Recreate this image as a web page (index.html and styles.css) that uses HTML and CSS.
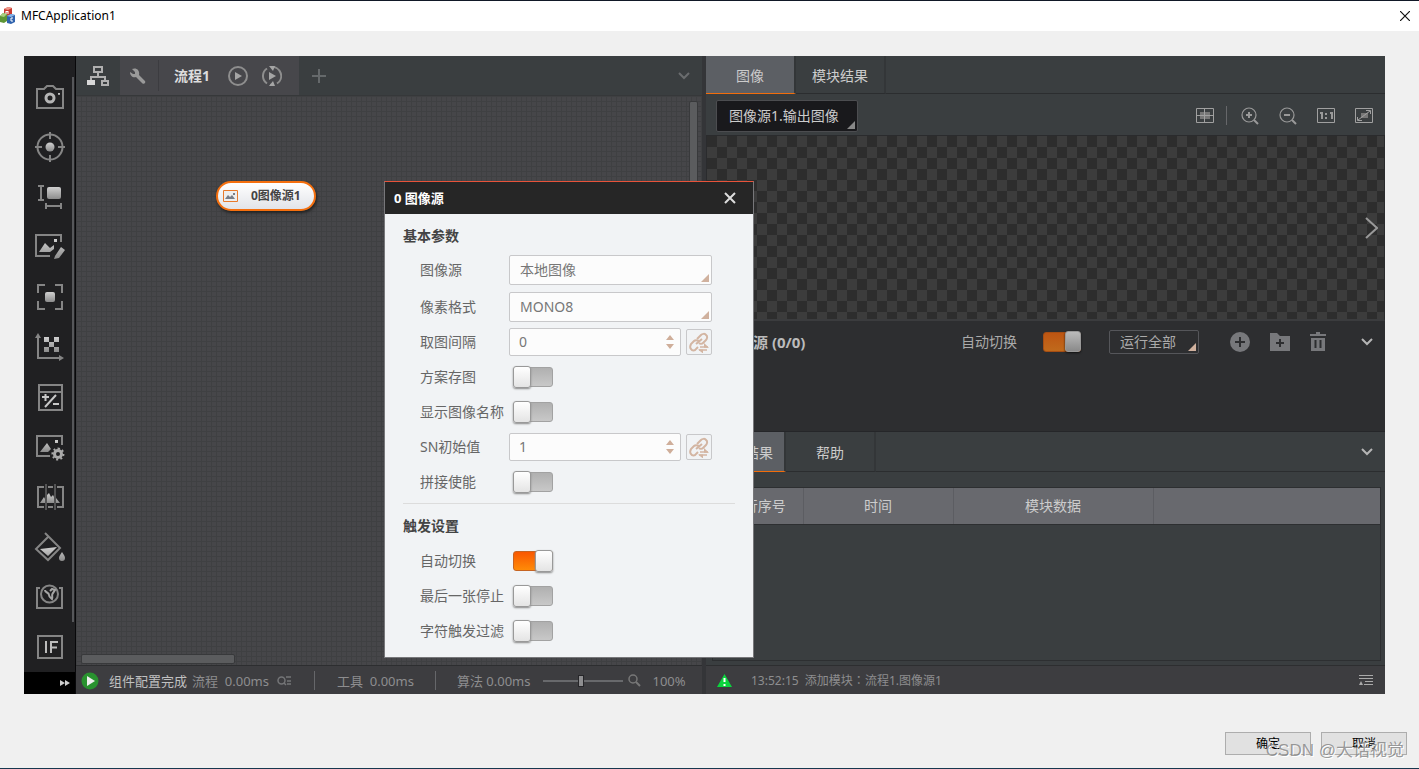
FILE: index.html
```html
<!DOCTYPE html>
<html lang="zh-CN">
<head>
<meta charset="utf-8">
<title>MFCApplication1</title>
<link rel="stylesheet" href="styles.css">
</head>
<body>
<svg width="0" height="0" class="defs" aria-hidden="true">
  <defs>
    <linearGradient id="g" x1="0" y1="0" x2="0" y2="1"><stop offset="0" stop-color="#d0d0d0"/><stop offset="1" stop-color="#8c8c8c"/></linearGradient>
    <symbol id="chev" viewBox="0 0 14 10"><path d="M2 2l5 5 5-5" fill="none" stroke="currentColor" stroke-width="2"/></symbol>
    <symbol id="link" viewBox="0 0 22 22">
      <g fill="none" stroke="#d3b5a2" stroke-width="2"><path d="M9 8l4-4c1-1 4-2 5 0 2 1 1 4 0 5l-3 3c-1 1-3 1-4 0"/><path d="M11 10c-2-1-4-1-5 0l-3 3c-1 2-1 4 0 5 1 2 4 2 5 0l2-2M8 13l6-5"/><path d="M12 16h8M11 19h8" stroke-width="1.500"/></g>
      <path d="M16 12l5 4.700h-5zM15 22.500l-5-4h5z" fill="#d3b5a2"/>
    </symbol>
  </defs>
</svg>
<div class="window">
  <header class="titlebar">
    <svg class="logo" width="16" height="18" viewBox="0 0 16 18">
      <path d="M4 2l4-2 4 1v6l-4 2-4-1z" fill="#c83a30"/><path d="M4 2l4 1 4-2-4-1z" fill="#f09a8c"/>
      <path d="M0 9l3-3 4 1v7l-3 2-4-1z" fill="#5d9636"/><path d="M0 9l3-3 4 1-3 3z" fill="#a8cf80"/>
      <path d="M7 9l4-2 4 1v7l-4 2-4-1z" fill="#2f62ad"/><path d="M7 9l4-2 4 1-4 2z" fill="#86b5e8"/>
      <path d="M6 7V4l1 1 1-1v3M13 11h-2v3h2" fill="none" stroke="#fff"/>
    </svg>
    <h1>MFCApplication1</h1>
    <button class="bare win-close" aria-label="关闭窗口"><svg width="10" height="10" viewBox="0 0 10 10"><path d="M0 0l10 10M10 0L0 10" stroke="#111" stroke-width="1.2"/></svg></button>
  </header>

  <main class="client">
    <div class="app">
      <nav class="tools" aria-label="工具箱">
        <div class="tool-list">
          <button class="bare tool" aria-label="采集"><svg viewBox="0 0 30 30"><path d="M2 7h7l3-3h6l3 3h7v19H2z"/><circle cx="15" cy="16" r="4" stroke-width="3" stroke="#b5b5b5"/><path class="f" d="M23 11h2v2h-2z"/></svg></button>
          <button class="bare tool" aria-label="定位"><svg viewBox="0 0 30 30"><circle cx="15" cy="15" r="12.5"/><path d="M15 0v7M15 23v7M0 15h7M23 15h7"/><circle class="f" cx="15" cy="15" r="4.5"/></svg></button>
          <button class="bare tool" aria-label="测量"><svg viewBox="0 0 30 30"><path d="M3 4h6M6 4v14M3 18h6M11 21v6M26 21v6M11 24h15"/><rect class="f" x="12" y="5" width="14" height="12" rx="2"/></svg></button>
          <button class="bare tool" aria-label="识别"><svg viewBox="0 0 30 30"><path d="M26 10V3H1v21h14"/><path class="f" d="M4 20l6-9 5 5 4-3v4l-4 3zM19 7h3v3h-3zM20 24l6-9 4 3-6 8-5 1z"/></svg></button>
          <button class="bare tool" aria-label="深度学习"><svg viewBox="0 0 30 30"><path d="M10 3H3v8M20 3h7v8M3 19v8h7M27 19v8h-7"/><rect class="f" x="10" y="10" width="10" height="10" rx="2"/></svg></button>
          <button class="bare tool" aria-label="标定"><svg viewBox="0 0 30 30"><path d="M3 4v22h24"/><path d="M0 6l3-5 3 5zM24 23l5 3-5 3z" fill="#858585" stroke="none"/><path class="f" d="M9 5h5v5H9zM19 5h5v5h-5zM14 10h5v5h-5zM9 15h5v5H9zM19 15h5v5h-5z"/></svg></button>
          <button class="bare tool" aria-label="运算"><svg viewBox="0 0 30 30"><path d="M4 3h23v25H4zM4 10h23"/><path d="M7 15h7M10.500 12v7M10 25l11-12M18 22h6" stroke="#c8c8c8"/></svg></button>
          <button class="bare tool" aria-label="图像处理"><svg viewBox="0 0 30 30"><path d="M27 13V4H2v20h13"/><path class="f" d="M5 20l7-9 4 6-3 3zM20 8h3v3h-3z"/><circle cx="23" cy="22" r="3.500" stroke="#aaa" stroke-width="3"/><path stroke="#aaa" stroke-dasharray="2 2.200" stroke-width="2" d="M23 16.500a5.500 5.500 0 1 1-.1 0"/></svg></button>
          <button class="bare tool" aria-label="颜色处理"><svg viewBox="0 0 30 30"><path d="M9 5H3v20h6M22 5h6v20h-6M13 25h5M13 5h5"/><path d="M11 2v26M20 2v26" stroke-width="1"/><path class="f" d="M5 21l4-6 1 2v4zM12 21v-8l2-2 2 4 2-2 1 2v6zM21 21v-5l4 5z"/></svg></button>
          <button class="bare tool" aria-label="缺陷检测"><svg viewBox="0 0 30 30"><path d="M14 4L1 17l12 11 12-12L10 1"/><path class="f" d="M5 17l17-2-9 9zM27 20c2 3 3 4 3 6s-1 3-3 3-3-1-3-3 1-3 3-6z"/></svg></button>
          <button class="bare tool" aria-label="逻辑工具"><svg viewBox="0 0 30 30"><path d="M5 6H2v20h25V6h-3"/><circle cx="14.500" cy="12" r="8.500"/><path d="M10 8c0 3 4 2 4 5 0 2 2 3 3 4 1-3-1-4 1-6l2-3-3-1-2 2" stroke="#a5a5a5"/></svg></button>
          <button class="bare tool" aria-label="条件分支"><svg viewBox="0 0 30 30"><path d="M3 4h24v22H3z"/><path d="M11 9v12M16 21V10h7M16 15.500h6" stroke="#bbb" stroke-width="2"/></svg></button>
        </div>
        <button class="bare expand" aria-label="展开"><svg width="10" height="6" viewBox="0 0 10 6"><path d="M0 0l5 3-5 3zM5 0l5 3-5 3z" fill="#ccc"/></svg></button>
      </nav>

      <section class="flow">
        <div class="flow-tabs">
          <button class="bare tree" aria-label="流程树"><svg width="22" height="20" viewBox="0 0 22 20"><g fill="none" stroke="#b0b0b0" stroke-width="2"><path d="M7 1h8v5H7zM11 6v5M4 14v-3h14v3M15 15h6v4h-6z"/></g><path d="M0 14h8v5H0z" fill="#d8d8d8"/></svg></button>
          <div class="flow-tab">
            <button class="bare wrench" aria-label="设置"><svg width="16" height="16" viewBox="0 0 16 16"><path d="M2 1l3 3v2H3L0 4c0 4 3 6 6 5l6 6c2 2 4 0 3-2L9 7c1-4-2-8-7-6z" fill="#999"/></svg></button>
            <span class="flow-name">流程1</span>
            <button class="bare" aria-label="执行一次"><svg width="20" height="20" viewBox="0 0 20 20"><circle cx="10" cy="10" r="9" fill="none" stroke="#8e8e8e" stroke-width="2"/><path d="M7 6l7 4-7 4z" fill="#a5a5a5"/></svg></button>
            <button class="bare" aria-label="连续执行"><svg width="20" height="20" viewBox="0 0 20 20"><path d="M5 2.500a9 9 0 0 0 0 15M9 1a9 9 0 0 1 6 16.500M11 19a9 9 0 0 1-3-.200" fill="none" stroke="#8e8e8e" stroke-width="2"/><path d="M7 6l7 4-7 4zM7 0h6l-2 5zM13 20H7l4-5z" fill="#a5a5a5"/></svg></button>
          </div>
          <button class="bare add" aria-label="新建流程"><svg width="14" height="14" viewBox="0 0 14 14"><path d="M7 0v14M0 7h14" stroke="#65696b" stroke-width="2"/></svg></button>
          <button class="bare more" aria-label="流程列表"><svg width="14" height="10"><use href="#chev"/></svg></button>
        </div>
        <div class="canvas">
          <div class="node"><svg width="15" height="12" viewBox="0 0 15 12"><path d="M.5.5h14v11H.5z" fill="#eee" stroke="#e87a2c"/><path d="M2 9l3-4 2 2 2-2 3 4zM10 3h2v2h-2z" fill="#777c86"/></svg><span>0图像源1</span></div>
          <div class="vbar"></div>
          <div class="hbar"></div>
        </div>
        <footer class="status">
          <svg class="run" width="18" height="18" viewBox="0 0 18 18"><circle cx="9" cy="9" r="8.500" fill="#29922f"/><path d="M6 4l8 5-8 5z" fill="#eee"/></svg>
          <span class="ready">组件配置完成</span>
          <span class="cost">流程&nbsp; 0.00ms</span>
          <svg class="detail" width="14" height="10" viewBox="0 0 14 10"><g fill="none" stroke="#747577" stroke-width="1.500"><circle cx="4.500" cy="4.500" r="3.500"/><path d="M7 7l2 2M9 1h5M10 5h4M10 8h4"/></g></svg>
          <i class="bar"></i>
          <span class="cost">工具&nbsp; 0.00ms</span>
          <i class="bar"></i>
          <span class="cost">算法 0.00ms</span>
          <input class="zoom" type="range" min="0" max="100" value="47" aria-label="缩放">
          <svg class="glass" width="13" height="13" viewBox="0 0 13 13"><circle cx="5" cy="5" r="4" fill="none" stroke="#777" stroke-width="1.500"/><path d="M8 8l4 4" stroke="#777" stroke-width="2"/></svg>
          <span>100%</span>
        </footer>
      </section>

      <section class="side">
        <div class="tabs">
          <button class="tab on">图像</button><button class="tab">模块结果</button>
        </div>
        <div class="imgbar">
          <div class="pick dark"><select aria-label="输出图像"><option>图像源1.输出图像</option></select></div>
          <div class="imgtools">
            <button class="bare" aria-label="网格"><svg width="18" height="16" viewBox="0 0 18 16"><path d="M4 4h10v7H4z" fill="#777"/><path d="M.5.500h17v14H.5zM8.500 0v15M0 7.500h18" fill="none" stroke="#a0a0a0"/></svg></button>
            <i class="bar"></i>
            <button class="bare" aria-label="放大"><svg width="18" height="18" viewBox="0 0 18 18"><g fill="none" stroke="#999"><circle cx="8" cy="8" r="7" stroke-width="1.200"/><path d="M13 13l4 4M5 8h6M8 5v6" stroke-width="2"/></g></svg></button>
            <button class="bare" aria-label="缩小"><svg width="18" height="18" viewBox="0 0 18 18"><g fill="none" stroke="#999"><circle cx="8" cy="8" r="7" stroke-width="1.200"/><path d="M13 13l4 4M5 8h6" stroke-width="2"/></g></svg></button>
            <button class="bare" aria-label="原始大小"><svg width="18" height="16" viewBox="0 0 18 16"><path d="M.5.500h17v14H.5z" fill="none" stroke="#a0a0a0"/><path d="M3 5h2v6M13 5h2v6M9 5v2M9 9v2" fill="none" stroke="#999" stroke-width="2"/></svg></button>
            <button class="bare" aria-label="适应窗口"><svg width="18" height="16" viewBox="0 0 18 16"><path d="M6 5h7v5H6z" fill="#777"/><path d="M.5.500h17v14H.5zM3 12l12-9M11 2.500h4.500V6M2.500 9v3.500H7" fill="none" stroke="#a0a0a0"/></svg></button>
          </div>
        </div>
        <div class="view"><button class="bare" aria-label="展开面板"><svg width="13" height="22" viewBox="0 0 13 22"><path d="M1 1l11 10L1 21" fill="none" stroke="#999" stroke-width="2"/></svg></button></div>
        <div class="source">
          <strong>图像源 (0/0)</strong>
          <label class="auto">自动切换 <input class="switch dim" type="checkbox" checked></label>
          <div class="pick run-all"><select aria-label="运行范围"><option>运行全部</option></select></div>
          <div class="acts">
            <button class="bare" aria-label="添加图像"><svg width="20" height="20" viewBox="0 0 20 20"><circle cx="10" cy="10" r="10" fill="#77787b"/><path d="M10 5v10M5 10h10" stroke="#2d2e30" stroke-width="2"/></svg></button>
            <button class="bare" aria-label="添加文件夹"><svg width="20" height="18" viewBox="0 0 20 18"><path d="M0 0h7l3 3h10v15H0z" fill="#77787b"/><path d="M10 6v8M6 10h8" stroke="#2d2e30" stroke-width="2"/></svg></button>
            <button class="bare" aria-label="删除"><svg width="16" height="20" viewBox="0 0 16 20"><path d="M0 2h6V0h4v2h6v2H0zM1 6h14v13H1z" fill="#77787b"/><path d="M5.500 8v8M10.500 8v8" stroke="#2d2e30" stroke-width="2"/></svg></button>
          </div>
          <button class="bare fold" aria-label="收起"><svg width="14" height="10"><use href="#chev"/></svg></button>
        </div>
        <div class="tabs lower">
          <button class="tab on">当前结果</button><button class="tab">帮助</button>
          <button class="bare fold" aria-label="收起结果"><svg width="14" height="10"><use href="#chev"/></svg></button>
        </div>
        <div class="results">
          <div class="grid-box">
            <table><thead><tr><th class="c1">执行序号</th><th class="c2">时间</th><th class="c3">模块数据</th><th></th></tr></thead></table>
          </div>
        </div>
        <footer class="status log">
          <svg width="15" height="13" viewBox="0 0 15 13"><path d="M7.500 0L15 13H0z" fill="#0bd53d"/><path d="M7.500 4v4M7.500 10v2" stroke="#fff" stroke-width="2"/></svg>
          <span>13:52:15&nbsp; 添加模块<span lang="zh-TW" class="colon">：</span>流程1.图像源1</span>
          <button class="bare" aria-label="日志"><svg width="14" height="11" viewBox="0 0 14 11"><path d="M0 .5h14M0 3.500h14M6 6.500h8M5 9.500h9" stroke="#aaa"/><path d="M2 6l2 4H0z" fill="#aaa"/></svg></button>
        </footer>
      </section>

      <div class="dialog" role="dialog" aria-labelledby="dt">
        <div class="dialog-head"><h2 id="dt">0 图像源</h2><button class="bare" aria-label="关闭"><svg width="12" height="12" viewBox="0 0 12 12"><path d="M1 1l10 10M11 1L1 11" stroke="#ddd" stroke-width="2"/></svg></button></div>
        <div class="group">
          <h3>基本参数</h3>
          <div class="row tall"><label for="a">图像源</label><div class="pick"><select id="a"><option>本地图像</option></select></div></div>
          <div class="row tall"><label for="b">像素格式</label><div class="pick"><select id="b"><option>MONO8</option></select></div></div>
          <div class="row"><label for="c">取图间隔</label><div class="num"><input id="c" type="text" inputmode="numeric" value="0"><svg width="8" height="16" viewBox="0 0 8 16"><path d="M0 6l4-5 4 5zM0 10l4 5 4-5z" fill="#cfae9a"/></svg></div><button class="bind" aria-label="绑定取图间隔"><svg width="22" height="22"><use href="#link"/></svg></button></div>
          <div class="row"><label for="d">方案存图</label><input class="switch" id="d" type="checkbox"></div>
          <div class="row"><label for="e">显示图像名称</label><input class="switch" id="e" type="checkbox"></div>
          <div class="row"><label for="f">SN初始值</label><div class="num"><input id="f" type="text" inputmode="numeric" value="1"><svg width="8" height="16" viewBox="0 0 8 16"><path d="M0 6l4-5 4 5zM0 10l4 5 4-5z" fill="#cfae9a"/></svg></div><button class="bind" aria-label="绑定SN初始值"><svg width="22" height="22"><use href="#link"/></svg></button></div>
          <div class="row"><label for="h">拼接使能</label><input class="switch" id="h" type="checkbox"></div>
        </div>
        <div class="group">
          <h3>触发设置</h3>
          <div class="row"><label for="i">自动切换</label><input class="switch" id="i" type="checkbox" checked></div>
          <div class="row"><label for="j">最后一张停止</label><input class="switch" id="j" type="checkbox"></div>
          <div class="row"><label for="k">字符触发过滤</label><input class="switch" id="k" type="checkbox"></div>
        </div>
      </div>
    </div>
    <div class="confirm"><button>确定</button><button>取消</button><span class="mark">CSDN @大话视觉</span></div>
  </main>
</div>
</body>
</html>
```

FILE: styles.css
```css
* { box-sizing: border-box; }
body { margin: 0; font: 14px/20px "Noto Sans", "Noto Sans CJK SC", sans-serif; color: #bbb; }
button, input, select { font: inherit; color: inherit; }
svg { display: block; flex: none; }
h1, h2, h3 { margin: 0; }
.defs { position: absolute; }
.bare { display: flex; align-items: center; justify-content: center; padding: 0; border: 0; background: none; }
.bar { width: 1px; height: 19px; background: #66676a; }

.window { display: flex; flex-direction: column; min-height: 100vh; background: #f0f0f0; border-top: 1px solid #111827; border-bottom: 1px solid #17384f; }
.titlebar { display: flex; align-items: center; gap: 5px; height: 30px; padding-right: 9px; background: #fff; }
.titlebar h1 { flex: 1; font: 12px/18px "Noto Sans", sans-serif; color: #000; }
.client { flex: 1; display: flex; flex-direction: column; padding: 25px 12px 13px 24px; }
.app { position: relative; flex: 1; display: grid; grid-template-columns: 52px minmax(0, 626fr) minmax(0, 683fr); margin-right: 22px; background: #343538; }

.tools { display: flex; flex-direction: column; background: #202022; border-right: 1px solid #08080a; }
.tool-list { flex: 1; display: flex; flex-direction: column; gap: 20px; margin-top: 21px; padding: 5px 0 0 11px; background: linear-gradient(#56575a, #56575a) right 1px top 0 / 2px 545px no-repeat; }
.tool { width: 30px; height: 30px; }
.tool svg { width: 30px; height: 30px; fill: none; stroke: #858585; stroke-width: 2; overflow: visible; }
.tool .f { fill: url(#g); stroke: none; }
.expand { height: 22px; padding-right: 5px; background: #000; justify-content: flex-end; }

.flow { display: flex; flex-direction: column; }
.flow-tabs { display: flex; height: 40px; background: #3a3e40; border-bottom: 1px solid #36383a; }
.tree { width: 44px; }
.flow-tab { display: flex; align-items: center; gap: 14px; width: 179px; background: #47474b; }
.wrench { width: 39px; height: 31px; border-right: 1px solid #3c3c40; padding-right: 3px; }
.flow-name { font-weight: 700; color: #ddd; margin: 0 4px 0 1px; }
.add { width: 40px; }
.more { margin-left: auto; width: 36px; color: #6a6c6e; }
.canvas { position: relative; flex: 1; background: repeating-linear-gradient(90deg, #3f4042 0 1px, transparent 1px 5px), repeating-linear-gradient(#3f4042 0 1px, #464649 1px 5px); }
.node { position: absolute; left: 140px; top: 85px; display: flex; align-items: center; gap: 13px; width: 100px; height: 30px; padding-left: 5px; border: 2px solid #f56f0e; border-radius: 15px; background: linear-gradient(#fff, #e2e4e9); font-size: 12px; font-weight: 700; color: #444; box-shadow: 1px 2px 3px #222; }
.vbar { position: absolute; right: 4px; top: 5px; bottom: 30px; width: 9px; background: #5b5c5e; border: 1px solid #38393b; border-radius: 2px; }
.hbar { position: absolute; left: 5px; bottom: 1px; width: 154px; height: 10px; background: #5b5c5e; border: 1px solid #38393b; border-radius: 2px; }
.status { display: flex; align-items: center; height: 29px; padding: 1px 0 0 5px; background: #3d3d40; border-top: 1px solid #2d2e30; font-size: 13px; color: #8d8d8f; white-space: nowrap; }
.run { margin-right: 10px; }
.ready { margin-right: 5px; color: #c0c0c0; }
.detail { margin-left: 8px; }
.status .bar { margin: 0 22px 0 23px; }
.status .cost + .bar { margin: 0 21px; }
.zoom { appearance: none; width: 80px; height: 12px; margin: 0 5px 0 13px; background: linear-gradient(#68696c, #68696c) center / 100% 2px no-repeat; }
.zoom::-webkit-slider-thumb { appearance: none; width: 6px; height: 12px; background: #8e8e90; border: 1px solid #262629; }
.glass { margin-right: 11px; }

.side { display: flex; flex-direction: column; background: #3a3e40; border-left: 4px solid #343538; }
.tabs { display: flex; height: 38px; border-bottom: 1px solid #2b2d2f; }
.tab { width: 90px; margin: 0 0 -1px; padding: 2px 0 0; border: 0; border-right: 2px solid #333638; background: #3a3e40; color: #ccc; border-bottom: 1px solid #2b2d2f; }
.tab.on { background: #5c5f64; border-bottom-color: #f26d0b; }
.imgbar { display: flex; align-items: center; justify-content: space-between; height: 41px; padding: 2px 12px 0 10px; }
.imgtools { display: flex; align-items: center; gap: 20px; }
.imgtools .bar { margin: 0 -6px 0 -8px; }
.pick { position: relative; width: 203px; height: 30px; }
.pick select { appearance: none; width: 100%; height: 100%; padding: 0 10px; border: 1px solid #c8c8ca; border-radius: 2px; background: #fcfcfc; color: #777; }
.pick::after { content: ""; position: absolute; right: 3px; bottom: 3px; border: 4px solid transparent; border-right-color: #d0b19e; border-bottom-color: #d0b19e; }
.pick.dark { width: 142px; height: 32px; }
.pick.dark select { padding: 0 12px; background: #19191c; border-color: #4c4d50; color: #ccc; }
.pick.dark::after { border-right-color: #888; border-bottom-color: #888; }
.view { display: flex; align-items: center; justify-content: flex-end; height: 186px; padding-right: 6px; border: 1px solid #2a2b2d; border-bottom: 2px solid #3b3c3e; background: conic-gradient(#3c3c3c 25%, #2d2d2d 0 50%, #3c3c3c 0 75%, #2d2d2d 0) 0 0 / 20px 22px; }
.source { display: flex; align-items: flex-start; flex: 0 0 111px; padding: 9px 11px 0 17px; background: #2d2e30; border-bottom: 1px solid #252629; }
.source > * { height: 24px; }
.source strong { flex: 1; font-size: 15px; line-height: 24px; }
.auto { display: flex; align-items: center; gap: 26px; color: #aaa; }
.pick.run-all { width: 90px; margin: 0 31px 0 28px; }
.run-all select { background: #2d2e30; border-color: #55565a; color: #aaa; }
.acts { display: flex; align-items: center; gap: 20px; margin-right: 34px; }
.fold { color: #b5b5b5; }
.tabs.lower { height: 40px; }
.lower .tab.on { width: 80px; padding-left: 0; }
.lower .fold { margin: 0 11px 0 auto; }
.results { flex: 1; display: flex; padding: 15px 4px 4px 6px; }
.grid-box { flex: 1; border: 1px solid #2d2f31; }
table { width: 100%; table-layout: fixed; border-collapse: collapse; background: #68696e; }
th { height: 36px; padding: 0; font-weight: 400; color: #ccc; border-right: 1px solid #5c5d62; border-bottom: 1px solid #2d2f31; }
th:last-child { border-right: 0; }
.c1 { width: 90px; } .c2 { width: 150px; } .c3 { width: 200px; }
.log { padding: 1px 12px 0 11px; font-size: 12px; }
.log > span { flex: 1; margin-left: 19px; }
.colon { font-family: "Noto Sans CJK TC", sans-serif; }

.switch { appearance: none; position: relative; width: 40px; height: 20px; margin: 0; border: 1px solid #a2a2a2; border-radius: 3px; background: linear-gradient(#b0b0b0, #c8c8c8); }
.switch::after { content: ""; box-sizing: border-box; position: absolute; left: -1px; top: -2px; width: 18px; height: 22px; border: 1px solid #999; border-radius: 3px; background: linear-gradient(#fff, #e4e4e4); box-shadow: 0 1px 2px #888; }
.switch:checked { background: linear-gradient(#f95700, #ff8b07); border-color: #c66422; }
.switch:checked::after { left: auto; right: -1px; }
.switch.dim { width: 38px; background: linear-gradient(#bd5512, #c06a1c); border-color: #a64e13; }
.switch.dim::after { width: 16px; height: 21px; background: linear-gradient(#bbb, #8a8a8a); border-color: #999; box-shadow: 0 1px 2px #111; }

.dialog { position: absolute; left: 360px; top: 125px; width: 370px; padding-bottom: 12px; background: #f1f3f5; border: 1px solid #77777a; border-top-color: #e8533a; color: #666; }
.dialog-head { display: flex; align-items: center; justify-content: space-between; height: 32px; padding: 0 17px 0 9px; background: #262626; }
.dialog h2 { font-size: 13px; line-height: 34px; color: #fff; }
.group { padding: 0 18px 7px; display: flex; flex-direction: column; gap: 7px; }
.group + .group { padding-bottom: 0; }
.group + .group::before { content: ""; height: 1px; margin-bottom: -7px; background: #dcdcdc; }
.group h3 { height: 41px; margin-bottom: -7px; padding-top: 2px; font-size: 14px; line-height: 40px; color: #444; }
.group + .group h3 { height: 43px; }
.row { display: flex; align-items: center; height: 28px; padding-left: 17px; }
.row.tall { height: 30px; }
.row.tall + .row:not(.tall) { margin-top: -1px; }
.row label { width: 89px; white-space: nowrap; }
.row .switch { margin-left: 4px; }
.num { display: flex; align-items: center; width: 172px; height: 28px; padding-right: 6px; border: 1px solid #c8c8ca; border-radius: 2px; background: #fcfcfc; }
.num input { flex: 1; min-width: 0; padding: 0 9px; border: 0; background: none; color: #777; }
.bind { display: flex; align-items: center; justify-content: center; width: 26px; height: 26px; margin-left: 5px; padding: 0; border: 1px solid #c8c8ca; border-radius: 2px; background: #f1f3f5; }

.confirm { position: relative; display: flex; justify-content: flex-end; gap: 10px; margin-top: 38px; }
.confirm button { width: 86px; height: 23px; padding: 0; border: 1px solid #adadad; background: #e1e1e1; color: #000; font-size: 12px; line-height: 20px; }
.mark { position: absolute; right: 3px; top: 8px; font: 17px/22px "Liberation Sans", "Noto Sans CJK SC", sans-serif; color: rgba(130, 130, 130, 0.8); text-shadow: 1px 1px 0 #fff; white-space: nowrap; }
```
